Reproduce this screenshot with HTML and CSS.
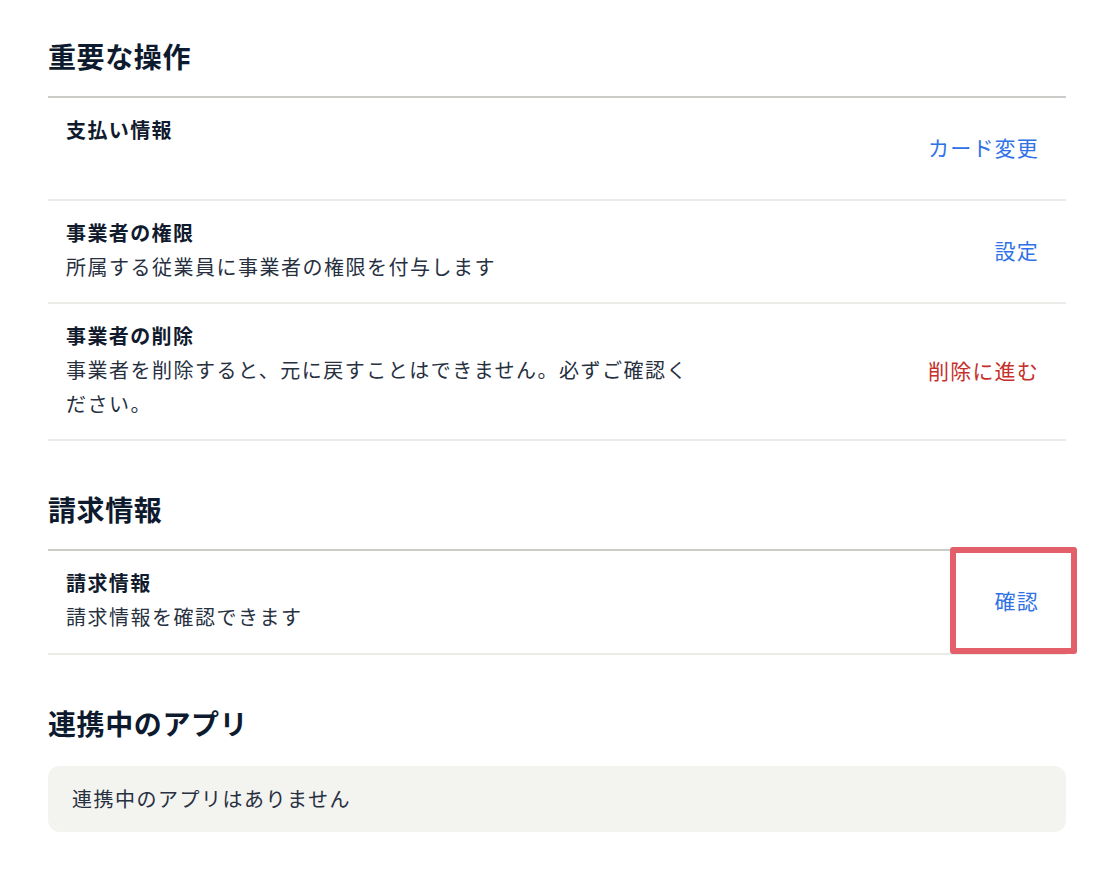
FILE: index.html
```html
<!DOCTYPE html>
<html lang="ja">
<head>
<meta charset="utf-8">
<title>設定</title>
<link rel="stylesheet" href="styles.css">
</head>
<body>
<main class="page">
  <section class="section">
    <h2 class="section-title">重要な操作</h2>
    <ul class="list">
      <li class="row">
        <div class="row-text">
          <div class="row-label">支払い情報</div>
          <div class="row-desc"></div>
        </div>
        <a class="row-action">カード変更</a>
      </li>
      <li class="row">
        <div class="row-text">
          <div class="row-label">事業者の権限</div>
          <div class="row-desc">所属する従業員に事業者の権限を付与します</div>
        </div>
        <a class="row-action">設定</a>
      </li>
      <li class="row">
        <div class="row-text">
          <div class="row-label">事業者の削除</div>
          <div class="row-desc">事業者を削除すると、元に戻すことはできません。必ずご確認ください。</div>
        </div>
        <a class="row-action danger">削除に進む</a>
      </li>
    </ul>
  </section>

  <section class="section">
    <h2 class="section-title">請求情報</h2>
    <ul class="list">
      <li class="row">
        <div class="row-text">
          <div class="row-label">請求情報</div>
          <div class="row-desc">請求情報を確認できます</div>
        </div>
        <a class="row-action">確認</a>
        <span class="highlight"></span>
      </li>
    </ul>
  </section>

  <section class="section">
    <h2 class="section-title">連携中のアプリ</h2>
    <div class="empty">連携中のアプリはありません</div>
  </section>
</main>
</body>
</html>
```

FILE: styles.css
```css
* { box-sizing: border-box; }

html, body {
  margin: 0;
  padding: 0;
  background: #ffffff;
}

body {
  font-family: "Noto Sans CJK JP", "Noto Sans", sans-serif;
  color: #1c2536;
}

.page {
  padding: 36px 46px 40px 48px;
}

.section + .section {
  margin-top: 48px;
}

.section-title {
  margin: 0 0 20px;
  font-size: 28px;
  line-height: 40px;
  font-weight: 700;
  color: #0e1a2e;
  letter-spacing: 0.6px;
}

.list {
  list-style: none;
  margin: 0;
  padding: 0;
  border-top: 2px solid #cacdc8;
}

.row {
  position: relative;
  display: flex;
  align-items: center;
  justify-content: space-between;
  padding: 15px 0 18px 18px;
  border-bottom: 2px solid #ebebe8;
}

.section:nth-child(2) .row {
  padding-bottom: 19px;
}

.row-text {
  max-width: 640px;
}

.row-label {
  font-size: 20px;
  line-height: 34px;
  font-weight: 700;
  letter-spacing: 1.4px;
  color: #111b2d;
}

.row-desc {
  min-height: 34px;
  font-size: 20px;
  line-height: 34px;
  letter-spacing: 1.5px;
  color: #27303f;
}

.row-action {
  padding-right: 27px;
  font-size: 21px;
  line-height: 34px;
  letter-spacing: 1.2px;
  color: #2f72e6;
  cursor: pointer;
  white-space: nowrap;
}

.row-action.danger {
  color: #c6302b;
}

.highlight {
  position: absolute;
  top: -4px;
  right: -11px;
  bottom: -1px;
  width: 127px;
  border: 6px solid #e3606b;
  border-radius: 3px;
  pointer-events: none;
}

.empty {
  margin-top: 23px;
  padding: 16px 24px;
  border-radius: 12px;
  background: #f3f3f0;
  font-size: 20px;
  line-height: 34px;
  letter-spacing: 1.5px;
  color: #27303f;
}
```
